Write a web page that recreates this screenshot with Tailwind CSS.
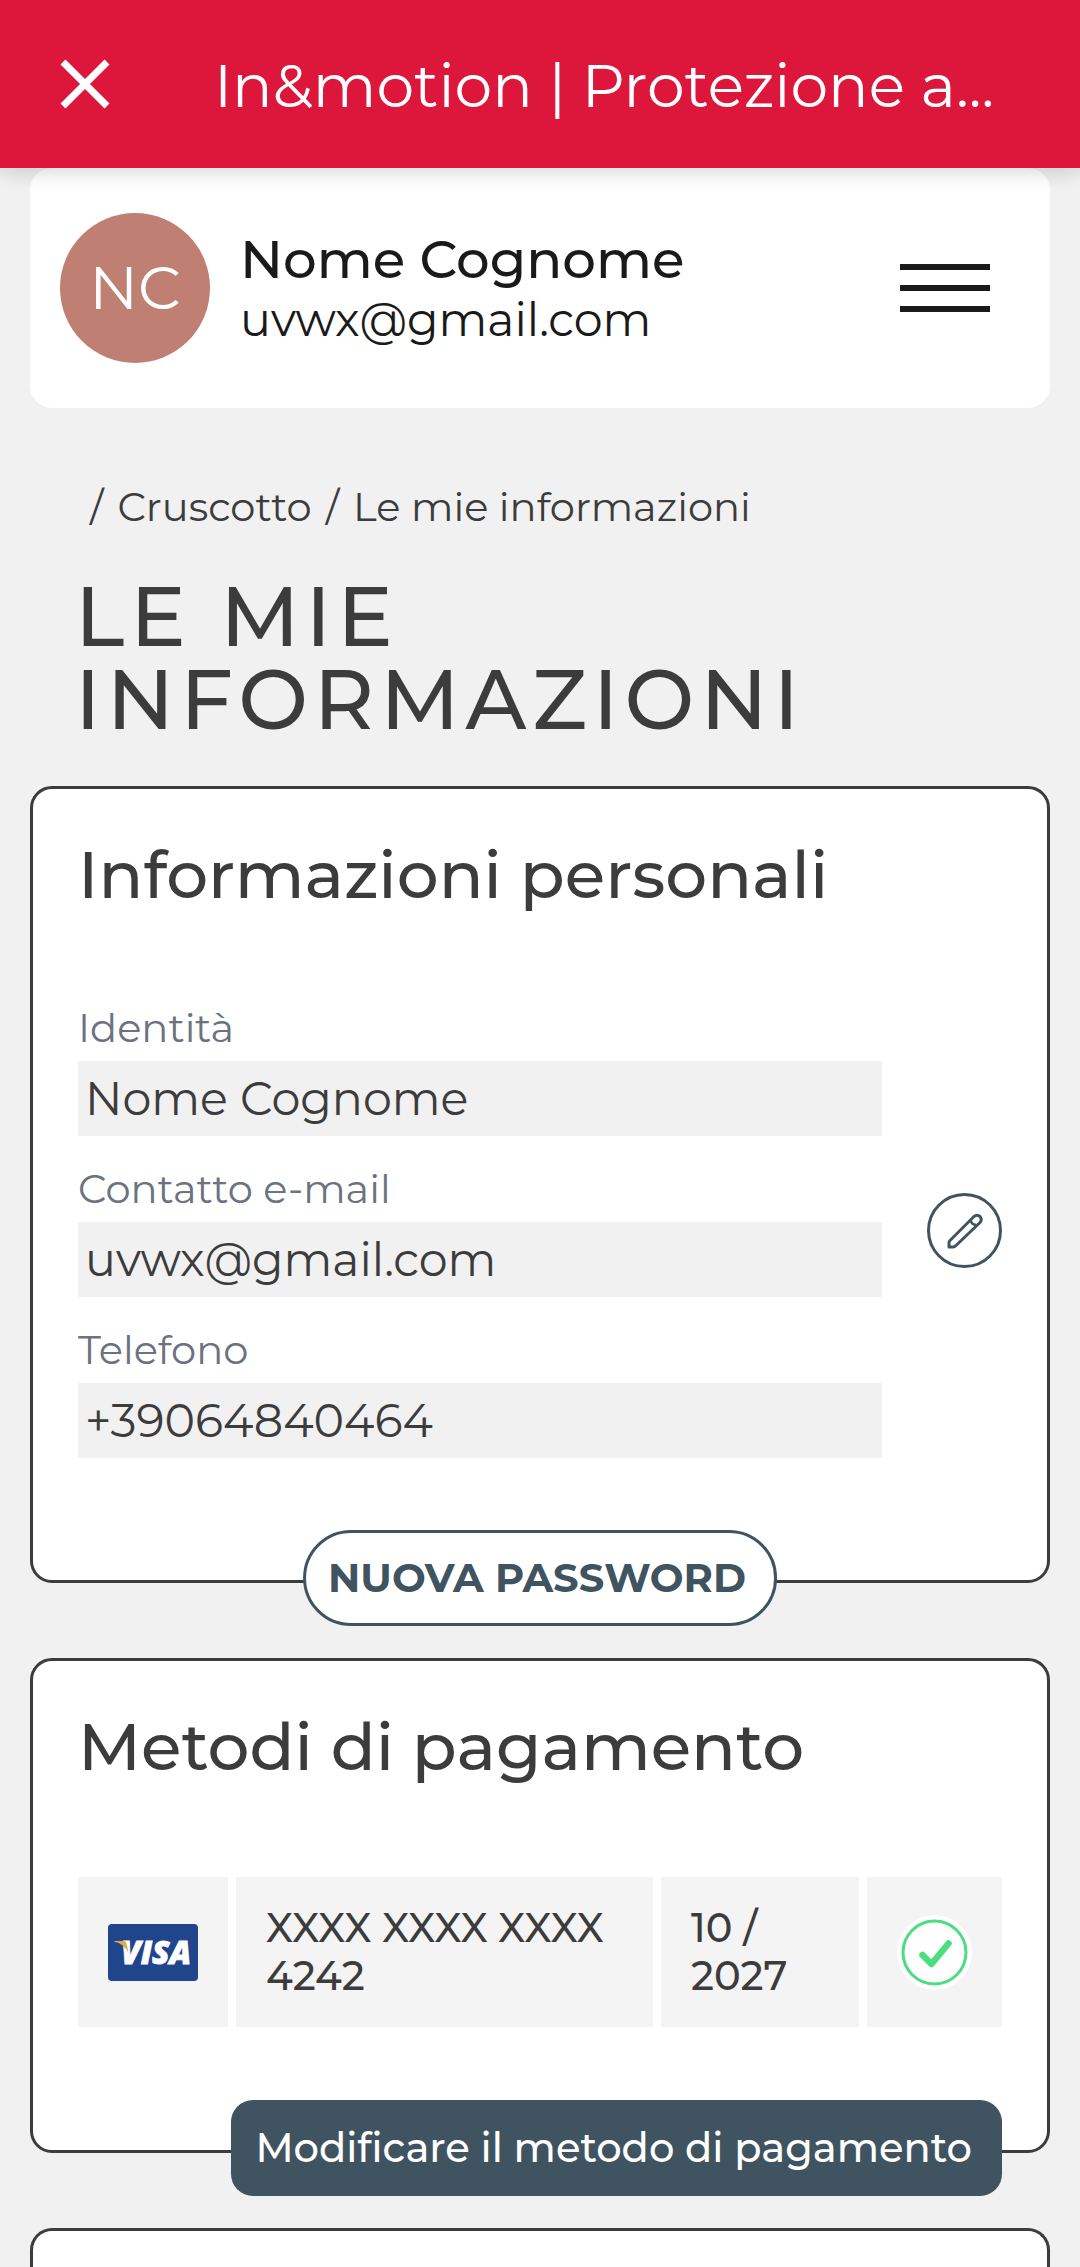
<!DOCTYPE html>
<html lang="it">
    <head>
        <meta charset="UTF-8" />
        <meta name="viewport" content="width=device-width, initial-scale=1.0"/>
        <title>In&amp;motion | Le mie informazioni</title>
        <script src="https://cdn.jsdelivr.net/npm/@tailwindcss/browser@4"></script>
    </head>
    <body class="bg-[#f1f1f1] min-h-screen flex flex-col text-[#3c3c3c] font-['Montserrat',Inter,sans-serif]">
    <!-- Browser bar -->
    <header class="relative z-10 bg-[#dd173c] text-white min-h-[168px] px-[60px] flex items-center shadow-[0_4px_20px_rgba(0,0,0,0.16)]">
        <button type="button" aria-label="Chiudi" class="shrink-0 mr-[104px]">
            <svg class="w-[50px] h-[50px]" viewBox="0 0 50 50" fill="none" stroke="currentColor" stroke-width="7">
                <path d="M3 3 47 47M47 3 3 47" />
            </svg>
        </button>
        <div class="pt-[4px] text-[60px] leading-[80px] whitespace-nowrap">In&amp;motion | Protezione a...</div>
    </header>

    <!-- Account -->
    <div class="bg-white mx-[30px] rounded-[22px] px-[30px] py-[45px] flex items-center">
        <div class="shrink-0 w-[150px] h-[150px] rounded-full bg-[#bf8073] text-white text-[60px] flex items-center justify-center">NC</div>
        <div class="flex-1 ml-[30px] pt-[2px] text-[#1a1a1a]">
            <div class="text-[53px] leading-[62px] font-medium">Nome Cognome</div>
            <div class="text-[46px] leading-[60px]">uvwx@gmail.com</div>
        </div>
        <button type="button" aria-label="Menu" class="shrink-0 w-[90px] mr-[30px] flex flex-col gap-[15px]">
            <span class="h-[6px] bg-[#1a1a1a]"></span>
            <span class="h-[6px] bg-[#1a1a1a]"></span>
            <span class="h-[6px] bg-[#1a1a1a]"></span>
        </button>
    </div>

    <nav class="px-[78px] pt-[69px] text-[40px] leading-[60px]">
        <ol class="flex flex-wrap gap-[14px] pl-[12px]">
            <li>/</li>
            <li><a href="#">Cruscotto</a></li>
            <li>/</li>
            <li><a href="#">Le mie informazioni</a></li>
        </ol>
    </nav>

    <h1 class="px-[75px] mt-[38px] mb-[45px] text-[83px] leading-[83px] font-medium uppercase tracking-[6px]">Le mie informazioni</h1>

    <!-- Informazioni personali -->
    <section class="relative bg-white border-3 border-[#3c3c3c] rounded-[22px] mx-[30px] mb-[75px] px-[45px] pt-[44px] pb-[114px]">
        <h2 class="text-[66px] leading-[84px] font-medium">Informazioni personali</h2>
        <form class="mt-[78px] flex items-center gap-[45px]">
            <div class="flex-1 flex flex-col gap-[20px] pb-[8px]">
                <div>
                    <label for="identity" class="block text-[40px] leading-[66px] text-[#6b7280]">Identità</label>
                    <input type="text" id="identity" value="Nome Cognome" readonly class="block w-full h-[75px] bg-[#f1f1f1] px-[7px] text-[46px]" />
                </div>
                <div>
                    <label for="email" class="block text-[40px] leading-[66px] text-[#6b7280]">Contatto e-mail</label>
                    <input type="email" id="email" value="uvwx@gmail.com" readonly class="block w-full h-[75px] bg-[#f1f1f1] px-[7px] text-[46px]" />
                </div>
                <div>
                    <label for="phone" class="block text-[40px] leading-[66px] text-[#6b7280]">Telefono</label>
                    <input type="tel" id="phone" value="+39064840464" readonly class="block w-full h-[75px] bg-[#f1f1f1] px-[7px] text-[46px]" />
                </div>
            </div>
            <button type="button" aria-label="Modifica" class="shrink-0 w-[75px] h-[75px] rounded-full border-3 border-[#3f5460] text-[#3f5460] flex items-center justify-center">
                <svg class="w-[36px] h-[36px]" viewBox="0 0 36 36" fill="none" stroke="currentColor" stroke-width="3" stroke-linejoin="round">
                    <path d="M2 34V29.500Q2 28.500 3 27.500L27 3.500Q30 1 33 3.500Q35.500 6.500 33 9.500L9 32.500Q7.500 34 6 34Z" />
                    <path d="M23.500 7C24.500 10.500 25.500 11 29 12" stroke-width="2.500" />
                </svg>
            </button>
        </form>
        <button type="button" class="absolute left-1/2 -translate-x-1/2 -bottom-[46px] h-[96px] pl-[22px] pr-[28px] whitespace-nowrap bg-white border-3 border-[#3f5460] rounded-full text-[#3f5460] text-[40px] font-bold">NUOVA PASSWORD</button>
    </section>

    <!-- Metodi di pagamento -->
    <section class="relative bg-white border-3 border-[#3c3c3c] rounded-[22px] mx-[30px] mb-[75px] px-[45px] pt-[44px] pb-[123px]">
        <h2 class="text-[66px] leading-[84px] font-medium">Metodi di pagamento</h2>
        <table class="mt-[88px] w-full table-fixed border-separate border-spacing-0 text-[40px] leading-[48px] font-medium">
            <tbody>
                <tr class="h-[150px]">
                    <td class="w-[158px] bg-[#f4f4f4] border-r-8 border-white px-[30px]">
                        <svg class="block w-[90px] h-[57px]" viewBox="0 0 90 57" role="img" aria-label="Visa">
                            <rect width="90" height="57" rx="4" fill="#20458c" />
                            <text x="13" y="40" fill="#fff" stroke="#fff" stroke-width="0.8" font-family="Open Sans, sans-serif" font-size="32" font-weight="800" font-style="italic">VISA</text>
                            <path d="M6 17H16Q18 17 18.500 19.500L20.500 29Q16 19.500 6 17.500Z" fill="#e3a83f" />
                        </svg>
                    </td>
                    <td class="w-[425px] bg-[#f4f4f4] border-r-8 border-white px-[30px]">XXXX XXXX XXXX 4242</td>
                    <td class="w-[206px] bg-[#f4f4f4] border-r-8 border-white px-[30px]">10 / 2027</td>
                    <td class="bg-[#f4f4f4] px-[30px]">
                        <svg class="block w-[75px] h-[75px]" viewBox="0 0 75 75" fill="none" stroke="#4ade80" role="img" aria-label="Attivo">
                            <circle cx="37.500" cy="37.500" r="37.500" fill="#fff" stroke="none" />
                            <circle cx="37.500" cy="37.500" r="31.500" stroke-width="3" />
                            <path d="M25.500 40 34.500 49 51.500 28.500" stroke-width="6.500" stroke-linecap="round" stroke-linejoin="round" />
                        </svg>
                    </td>
                </tr>
            </tbody>
        </table>
        <button type="button" class="absolute right-[45px] -bottom-[46px] h-[96px] pl-[24px] pr-[30px] whitespace-nowrap bg-[#3f5460] rounded-[22px] text-white text-[40px] font-medium">Modificare il metodo di pagamento</button>
    </section>

    <!-- Next card, continues below the fold -->
    <section class="flex-1 bg-white border-3 border-b-0 border-[#3c3c3c] rounded-t-[22px] mx-[30px]"></section>
    </body>
</html>
